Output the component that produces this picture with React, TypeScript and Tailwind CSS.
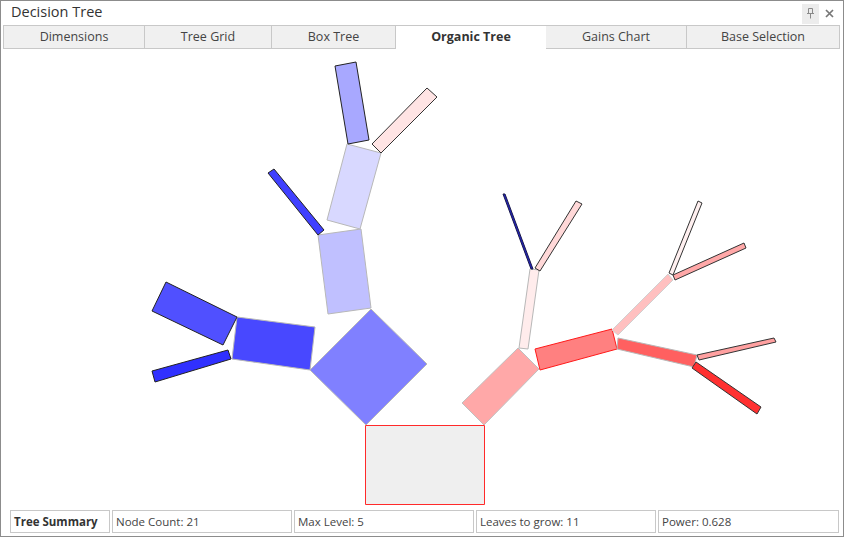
import React from 'react';

type Node = { pts: string; fill: string; stroke: string };

// polygons in page coordinates (svg viewBox is aligned with the page)
const nodes: Node[] = [
  { pts: '365.5,425.5 484.5,425.5 484.5,504.5 365.5,504.5', fill: '#efefef', stroke: '#ff2a2a' },
  // left / blue side
  { pts: '366,425 427,364 371,309 310,370', fill: '#8080ff', stroke: '#b8b8b8' },
  { pts: '318,235 361,229 371,308 328,314', fill: '#c0c0ff', stroke: '#b8b8b8' },
  { pts: '347,144 381,153 360,229 327,220', fill: '#d8d8ff', stroke: '#b8b8b8' },
  { pts: '335,66 356,62 369,140 348,144', fill: '#a8a8ff', stroke: '#222' },
  { pts: '427,88 437,97 381,153 372,144', fill: '#ffe4e4', stroke: '#333' },
  { pts: '268,173 274,169 324,230 318,235', fill: '#4040ff', stroke: '#222' },
  { pts: '237,317 315,327 310,370 232,359', fill: '#4848ff', stroke: '#b8b8b8' },
  { pts: '152,311 166,282 237,317 223,345', fill: '#5050ff', stroke: '#222' },
  { pts: '152,371 228,350 231,359 155,382', fill: '#3030ff', stroke: '#222' },
  // right / red side
  { pts: '462,403 518,348 539,369 484,425', fill: '#ffa8a8', stroke: '#c0c0c0' },
  { pts: '519,348 528,349 539,270 530,269', fill: '#ffecec', stroke: '#b8b8b8' },
  { pts: '503,194 505,194 533,269 531,269', fill: '#2020c0', stroke: '#1a1a4a' },
  { pts: '576,201 582,204 540,271 535,268', fill: '#ffd8d8', stroke: '#333' },
  { pts: '535,349 612,329 617,349 540,370', fill: '#ff8080', stroke: '#ff1a1a' },
  { pts: '612,330 668,274 673,280 618,335', fill: '#ffc0c0', stroke: '#d0d0d0' },
  { pts: '698,201 702,203 673,275 669,273', fill: '#fff0f0', stroke: '#333' },
  { pts: '673,275 744,243 746,248 675,280', fill: '#ffa8a8', stroke: '#333' },
  { pts: '618,338 697,355 694,367 617,349', fill: '#ff6060', stroke: '#b8b8b8' },
  { pts: '697,355 774,338 776,342 699,360', fill: '#ffa0a0', stroke: '#333' },
  { pts: '696,362 761,407 757,414 692,368', fill: '#ff3030', stroke: '#333' },
];

const tabs = [
  { label: 'Dimensions', w: 'w-[142px]' },
  { label: 'Tree Grid', w: 'w-[127px]' },
  { label: 'Box Tree', w: 'w-[124px]' },
  { label: 'Organic Tree', w: 'w-[150px]', active: true },
  { label: 'Gains Chart', w: 'w-[141px]' },
  { label: 'Base Selection', w: 'w-[153px]' },
];

const stats = [
  { label: 'Tree Summary', w: 'w-[100px]', bold: true },
  { label: 'Node Count: 21', w: 'w-[180px]' },
  { label: 'Max Level: 5', w: 'w-[180px]' },
  { label: 'Leaves to grow: 11', w: 'w-[180px]' },
  { label: 'Power: 0.628', w: 'w-[181px]' },
];

export default function App() {
  return (
    <div
      className="w-[844px] h-[537px] bg-white border border-[#8c8c8c] flex flex-col text-[#3c3c3c] overflow-hidden"
      style={{ fontFamily: '"Open Sans", "Noto Sans", sans-serif' }}
    >
      {/* title bar */}
      <div className="h-[24px] flex items-center shrink-0">
        <span className="pl-[10px] pb-[1px] text-[14.5px] leading-none text-[#333]">Decision Tree</span>
        <div className="ml-auto flex items-center h-full pr-[4px]">
          <div className="w-[17px] h-[20px] mt-[1px] bg-[#ececec] flex items-center justify-center">
            <svg width="9" height="11" viewBox="0 0 9 11" fill="none" stroke="#8a8a8a" strokeWidth="1">
              <path d="M2.5 0.5h4M2.5 0.5v5M6.5 0.5v5M1 5.5h7M4.5 5.5v5" />
            </svg>
          </div>
          <div className="w-[20px] h-[20px] flex items-center justify-center">
            <svg width="9" height="9" viewBox="0 0 9 9" stroke="#777" strokeWidth="1.7">
              <path d="M1 1l7 7M8 1l-7 7" />
            </svg>
          </div>
        </div>
      </div>

      {/* tabs */}
      <div className="h-[24px] flex pl-[2px] shrink-0">
        {tabs.map((t) => (
          <div
            key={t.label}
            className={
              t.active
                ? `${t.w} h-full bg-white border-t border-[#c8c8c8] flex items-center justify-center text-[12.5px] font-bold text-[#333]`
                : `${t.w} h-full bg-[#f0f0f0] border border-l-0 first:border-l border-[#c8c8c8] flex items-center justify-center text-[12.5px] text-[#444]`
            }
          >
            {t.label}
          </div>
        ))}
      </div>

      {/* organic tree canvas */}
      <div className="flex-1 relative">
        <svg width="842" height="461" viewBox="1 49 842 461" className="block">
          {nodes.map((n, i) => (
            <polygon key={i} points={n.pts} fill={n.fill} stroke={n.stroke} strokeWidth="1" strokeLinejoin="round" />
          ))}
        </svg>
      </div>

      {/* summary bar */}
      <div className="h-[26px] flex gap-[2px] pl-[9px] shrink-0">
        {stats.map((s) => (
          <div
            key={s.label}
            className={`${s.w} h-[23px] border border-[#c8c8c8] flex items-center px-[3px] text-[11.5px] ${
              s.bold ? 'font-bold text-[#333]' : 'text-[#444]'
            }`}
          >
            {s.label}
          </div>
        ))}
      </div>
    </div>
  );
}
